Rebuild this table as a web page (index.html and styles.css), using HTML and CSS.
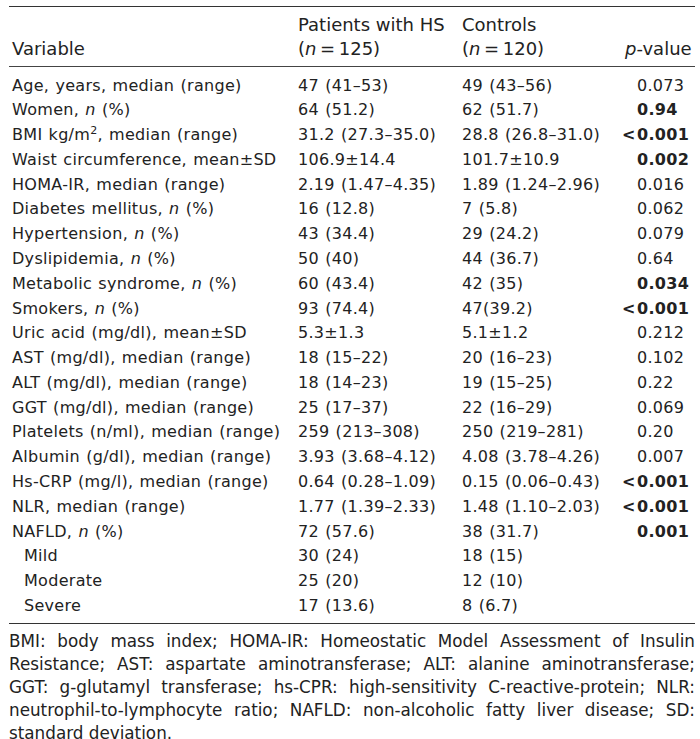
FILE: index.html
```html
<!DOCTYPE html>
<html>
<head>
<meta charset="utf-8">
<link rel="stylesheet" href="styles.css">
</head>
<body>
<div class="wrap">
<table class="tbl">
<colgroup><col class="c1"><col class="c2"><col class="c3"><col class="c4"></colgroup>
<thead>
<tr>
<th>Variable</th>
<th>Patients with HS<br>(<i>n</i>&#8201;=&#8201;125)</th>
<th>Controls<br>(<i>n</i>&#8201;=&#8201;120)</th>
<th class="pv"><i>p</i>-value</th>
</tr>
</thead>
<tbody>
<tr class="first"><td>Age, years, median (range)</td><td>47 (41–53)</td><td>49 (43–56)</td><td class="p">0.073</td></tr>
<tr><td>Women, <i>n</i> (%)</td><td>64 (51.2)</td><td>62 (51.7)</td><td class="p"><b>0.94</b></td></tr>
<tr><td>BMI kg/m<sup>2</sup>, median (range)</td><td>31.2 (27.3–35.0)</td><td>28.8 (26.8–31.0)</td><td class="p"><b><span class="lt">&lt;</span>0.001</b></td></tr>
<tr><td>Waist circumference, mean±SD</td><td>106.9±14.4</td><td>101.7±10.9</td><td class="p"><b>0.002</b></td></tr>
<tr><td>HOMA-IR, median (range)</td><td>2.19 (1.47–4.35)</td><td>1.89 (1.24–2.96)</td><td class="p">0.016</td></tr>
<tr><td>Diabetes mellitus, <i>n</i> (%)</td><td>16 (12.8)</td><td>7 (5.8)</td><td class="p">0.062</td></tr>
<tr><td>Hypertension, <i>n</i> (%)</td><td>43 (34.4)</td><td>29 (24.2)</td><td class="p">0.079</td></tr>
<tr><td>Dyslipidemia, <i>n</i> (%)</td><td>50 (40)</td><td>44 (36.7)</td><td class="p">0.64</td></tr>
<tr><td>Metabolic syndrome, <i>n</i> (%)</td><td>60 (43.4)</td><td>42 (35)</td><td class="p"><b>0.034</b></td></tr>
<tr><td>Smokers, <i>n</i> (%)</td><td>93 (74.4)</td><td>47(39.2)</td><td class="p"><b><span class="lt">&lt;</span>0.001</b></td></tr>
<tr><td>Uric acid (mg/dl), mean±SD</td><td>5.3±1.3</td><td>5.1±1.2</td><td class="p">0.212</td></tr>
<tr><td>AST (mg/dl), median (range)</td><td>18 (15–22)</td><td>20 (16–23)</td><td class="p">0.102</td></tr>
<tr><td>ALT (mg/dl), median (range)</td><td>18 (14–23)</td><td>19 (15–25)</td><td class="p">0.22</td></tr>
<tr><td>GGT (mg/dl), median (range)</td><td>25 (17–37)</td><td>22 (16–29)</td><td class="p">0.069</td></tr>
<tr><td>Platelets (n/ml), median (range)</td><td>259 (213–308)</td><td>250 (219–281)</td><td class="p">0.20</td></tr>
<tr><td>Albumin (g/dl), median (range)</td><td>3.93 (3.68–4.12)</td><td>4.08 (3.78–4.26)</td><td class="p">0.007</td></tr>
<tr><td>Hs-CRP (mg/l), median (range)</td><td>0.64 (0.28–1.09)</td><td>0.15 (0.06–0.43)</td><td class="p"><b><span class="lt">&lt;</span>0.001</b></td></tr>
<tr><td>NLR, median (range)</td><td>1.77 (1.39–2.33)</td><td>1.48 (1.10–2.03)</td><td class="p"><b><span class="lt">&lt;</span>0.001</b></td></tr>
<tr><td>NAFLD, <i>n</i> (%)</td><td>72 (57.6)</td><td>38 (31.7)</td><td class="p"><b>0.001</b></td></tr>
<tr><td class="ind">Mild</td><td>30 (24)</td><td>18 (15)</td><td class="p"></td></tr>
<tr><td class="ind">Moderate</td><td>25 (20)</td><td>12 (10)</td><td class="p"></td></tr>
<tr class="last"><td class="ind">Severe</td><td>17 (13.6)</td><td>8 (6.7)</td><td class="p"></td></tr>
</tbody>
</table>
<div class="note">
<span class="ln">BMI: body mass index; HOMA-IR: Homeostatic Model Assessment of Insulin</span>
<span class="ln">Resistance; AST: aspartate aminotransferase; ALT: alanine aminotransferase;</span>
<span class="ln">GGT: g-glutamyl transferase; hs-CPR: high-sensitivity C-reactive-protein; NLR:</span>
<span class="ln">neutrophil-to-lymphocyte ratio; NAFLD: non-alcoholic fatty liver disease; SD:</span>
<span class="ln end">standard deviation.</span>
</div>
</div>
</body>
</html>
```

FILE: styles.css
```css
html, body {
  margin: 0;
  padding: 0;
  background: #fff;
}
.wrap {
  width: 686px;
  margin: 6px 0 0 9px;
  color: #222;
}
.tbl {
  width: 686px;
  border-collapse: collapse;
  font-family: "DejaVu Sans", Verdana, sans-serif;
  font-size: 16px;
  letter-spacing: 0.3px;
  word-spacing: 0.8px;
  table-layout: fixed;
}
.c1 { width: 286px; }
.c2 { width: 164px; }
.c3 { width: 163px; }
.c4 { width: 73px; }
.tbl thead tr {
  border-top: 1px solid #333;
  border-bottom: 1px solid #444;
}
.tbl th {
  font-weight: normal;
  font-size: 18px;
  letter-spacing: 0;
  word-spacing: 0;
  text-align: left;
  vertical-align: bottom;
  line-height: 24px;
  padding: 6px 0 5px 3px;
  white-space: nowrap;
}
.tbl th.pv {
  text-align: right;
  padding-right: 8px;
}
.tbl td {
  line-height: 19px;
  padding: 2.9px 0 2.9px 3px;
  white-space: nowrap;
}
.tbl tr.first td { padding-top: 8.5px; }
.tbl tr.last td { padding-bottom: 8.5px; }
.tbl tbody tr.last { border-bottom: 1px solid #333; }
.tbl td.p { padding-left: 15px; }
.tbl td.ind { padding-left: 15px; }
.lt {
  display: inline-block;
  margin-left: -15px;
  width: 15px;
}
sup {
  font-size: 11px;
  line-height: 0;
  vertical-align: 6px;
}
.note {
  font-family: "DejaVu Sans", Verdana, sans-serif;
  font-size: 16.8px;
  line-height: 22.9px;
  padding-top: 6px;
}
.ln {
  display: block;
  text-align: justify;
  text-align-last: justify;
}
.ln.end {
  text-align-last: left;
}
```
